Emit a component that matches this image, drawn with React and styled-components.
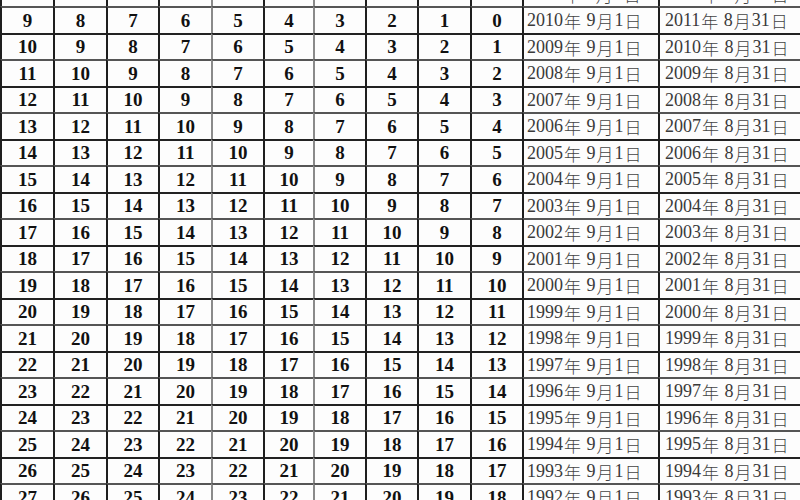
import React from "react";
import styled, { createGlobalStyle } from "styled-components";

const Global = createGlobalStyle`
  html, body { margin: 0; padding: 0; background: #fff; }
  #root { width: 800px; height: 500px; }
`;

const Viewport = styled.div`
  width: 800px;
  height: 500px;
  overflow: hidden;
  background: #fdfdfd;
`;

const Grid = styled.div`
  display: grid;
  grid-template-columns: 53px 53px 52px 53px 52px 50px 52px 52px 53px 52px 136px 142px;
  grid-auto-rows: 26.5px;
  width: 800px;
  margin-top: -20.5px;
`;

const Cell = styled.div`
  box-sizing: border-box;
  border-top: 2px solid ${(p) => (p.$softTop ? "#555" : "#222")};
  border-left: 2px solid ${(p) => (p.$soft ? "#8a8a8a" : "#1e1e1e")};
  display: flex;
  align-items: center;
`;

const NumCell = styled(Cell)`
  justify-content: center;
  font-family: "Liberation Serif", "Times New Roman", serif;
  font-weight: bold;
  font-size: 19px;
  color: #111;
  padding-top: 1px;
`;

const DateCell = styled(Cell)`
  justify-content: flex-start;
  padding-left: ${(p) => p.$pad}px;
  font-family: "Liberation Serif", "Noto Sans CJK SC", serif;
  font-size: 18px;
  color: #3a3a3a;
  white-space: nowrap;
  padding-top: 1px;
`;

const Han = styled.span`
  font-family: "Noto Sans CJK SC", sans-serif;
  font-size: 17px;
  font-weight: 300;
  color: #444;
  margin: 0 1px;
`;

const softCols = new Set([4, 6]);

function DateText({ year, month, day }) {
  return (
    <>
      {year}
      <Han>年</Han>&nbsp;{month}
      <Han>月</Han>
      {day}
      <Han>日</Han>
    </>
  );
}

export default function App() {
  const rows = [];
  for (let n = 8; n <= 27; n++) rows.push(n);
  return (
    <Viewport>
      <Global />
      <Grid>
        {rows.map((n, ri) => {
          const softTop = ri % 2 === 1;
          const nums = [];
          for (let i = 0; i < 10; i++) {
            const v = n - i;
            nums.push(
              <NumCell key={`n${i}`} $soft={softCols.has(i)} $softTop={softTop}>
                {v >= 0 ? v : ""}
              </NumCell>
            );
          }
          const start = 2019 - n;
          return (
            <React.Fragment key={n}>
              {nums}
              <DateCell $pad={3} $softTop={softTop}>
                <DateText year={start} month={9} day={1} />
              </DateCell>
              <DateCell $pad={5} $softTop={softTop}>
                <DateText year={start + 1} month={8} day={31} />
              </DateCell>
            </React.Fragment>
          );
        })}
      </Grid>
    </Viewport>
  );
}
